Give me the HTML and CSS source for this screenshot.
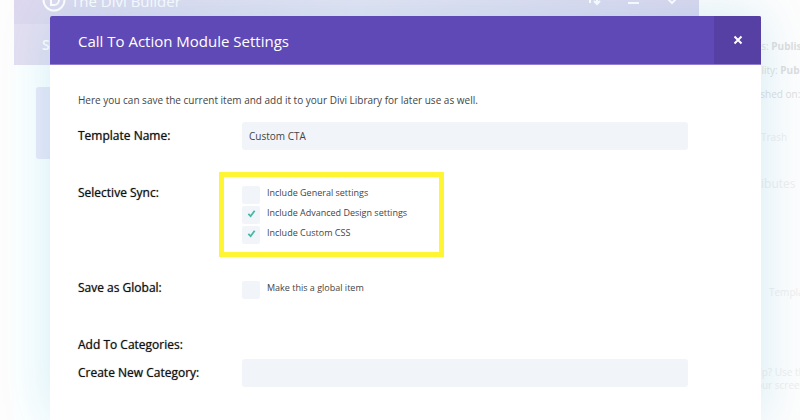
FILE: index.html
```
<!DOCTYPE html>
<html lang="en">
<head>
  <meta charset="UTF-8" />
  <meta name="viewport" content="width=device-width, initial-scale=1" />
  <title>Call To Action Module Settings</title>
  <link rel="stylesheet" href="styles.css">
</head>
<body>
  <div class="page" aria-hidden="true">
    <div class="builder">
      <div class="builder-bar">
        <svg class="logo" viewBox="0 0 24 24"><circle cx="12" cy="12" r="10.5" /><path d="M9 7v10h3a5 5 0 0 0 0-10z" /></svg>
        <span class="builder-title">The Divi Builder</span>
        <svg class="bar-icon" viewBox="0 0 14 14"><path d="M3 11V2M0 5l3-3 3 3M10 2v9M7 9l3 3 3-3" /></svg>
        <svg class="bar-icon" viewBox="0 0 14 14"><path d="M2 3h11M2 7h11M2 11h11" /></svg>
        <svg class="bar-icon" viewBox="0 0 14 14"><path d="M2 6l5 5 5-5" /></svg>
      </div>
      <div class="builder-tools">Save</div>
      <div class="builder-body">
        <div class="section-handle"></div>
      </div>
    </div>
    <div class="sidebar">
      <p>Status: <b>Published</b></p>
      <p>Visibility: <b>Public</b></p>
      <p>Published on:</p>
      <p class="trash">Trash</p>
      <p class="attributes">Attributes</p>
      <p class="template">Template</p>
      <p class="help">Need help? Use the<br>above your screen</p>
    </div>
  </div>

  <div class="modal">
    <div class="modal-header">
      <h1>Call To Action Module Settings</h1>
      <button class="close" type="button" aria-label="Close">
        <svg viewBox="0 0 10 10"><path d="M1.5 1.5l7 7M8.5 1.5l-7 7" /></svg>
      </button>
    </div>
    <form class="modal-body">
      <p class="intro">Here you can save the current item and add it to your Divi Library for later use as well.</p>

      <div class="row name-row">
        <label class="label" for="templateName">Template Name:</label>
        <input class="text" type="text" id="templateName" value="Custom CTA">
      </div>

      <div class="row sync-row" role="group" aria-labelledby="syncLabel">
        <span class="label" id="syncLabel">Selective Sync:</span>
        <div class="checks">
          <label class="check"><input type="checkbox">Include General settings</label>
          <label class="check"><input type="checkbox" checked>Include Advanced Design settings</label>
          <label class="check"><input type="checkbox" checked>Include Custom CSS</label>
          <div class="highlight"></div>
        </div>
      </div>

      <div class="row global-row" role="group" aria-labelledby="globalLabel">
        <span class="label" id="globalLabel">Save as Global:</span>
        <div class="checks">
          <label class="check"><input type="checkbox">Make this a global item</label>
        </div>
      </div>

      <div class="row">
        <span class="label">Add To Categories:</span>
      </div>

      <div class="row">
        <label class="label" for="newCategory">Create New Category:</label>
        <input class="text" type="text" id="newCategory">
      </div>
    </form>
  </div>
</body>
</html>
```

FILE: styles.css
```
* {
  margin: 0;
  padding: 0;
  box-sizing: border-box;
}

body {
  height: 100vh;
  overflow: hidden;
  position: relative;
  background: #fdfdfd;
  font-family: 'Open Sans', sans-serif;
  color: #444;
}

svg {
  fill: none;
  stroke: currentColor;
  stroke-width: 2;
}

/* faded page behind the modal */
.page {
  position: absolute;
  inset: 0;
  display: flex;
  padding-left: 14px;
  overflow: hidden;
}

.builder {
  flex: 1;
  display: flex;
  flex-direction: column;
  color: #fff;
}

.builder-bar {
  display: flex;
  align-items: flex-end;
  gap: 25px;
  height: 24px;
  padding: 0 20px 12px 28px;
  background: linear-gradient(90deg, #ddd8ee, #e6e5f3 50%, #dcd8ee);
}

.logo {
  flex: none;
  width: 24px;
  height: 24px;
  margin-right: -20px;
}

.builder-title {
  flex: 1;
  font-size: 15px;
  line-height: 22px;
}

.bar-icon {
  flex: none;
  width: 14px;
  height: 14px;
  margin-bottom: 6px;
}

.builder-tools {
  height: 41px;
  padding-left: 28px;
  background: #e4dff1;
  font-size: 14px;
  font-weight: 600;
  line-height: 41px;
}

.builder-body {
  flex: 1;
  padding: 22px;
  background: #fcffff;
}

.section-handle {
  width: 60px;
  height: 72px;
  background: #e9e9f8;
  border-radius: 3px;
}

.sidebar {
  flex: none;
  width: 101px;
  padding: 34px 0 0 38px;
  font-size: 10px;
  line-height: 24px;
  color: #dedede;
  white-space: nowrap;
}

.trash,
.attributes,
.template,
.help {
  color: #eee;
}

.trash {
  margin-top: 19px;
  padding-left: 24px;
}

.attributes {
  margin-top: 23px;
  padding-left: 3px;
  font-size: 12px;
}

.template {
  margin-top: 84px;
  padding-left: 32px;
}

.help {
  margin-top: 62px;
  margin-left: -17px;
  line-height: 13px;
}

.modal {
  position: absolute;
  top: 16px;
  bottom: 0;
  left: 50px;
  right: 39px;
  background: #fff;
  border-radius: 2px 2px 0 0;
  box-shadow: 0 0 50px rgba(0, 150, 200, 0.17);
}

.modal-header {
  display: flex;
  align-items: stretch;
  height: 49px;
  padding-left: 28px;
  background: #5f49b6;
  border-bottom: 1px solid #927fd0;
  border-radius: 2px 2px 0 0;
  color: #fff;
}

.modal-header h1 {
  flex: 1;
  font-size: 15px;
  font-weight: 400;
  line-height: 50px;
}

.close {
  display: grid;
  place-items: center;
  width: 47px;
  background: #5640a3;
  border: 0;
  border-radius: 0 2px 0 0;
  color: #fff;
  cursor: pointer;
}

.close svg {
  width: 10px;
  height: 10px;
}

.modal-body {
  padding: 26px 73px 0 28px;
}

.intro {
  margin-bottom: 13px;
  font-size: 10px;
  line-height: 18px;
}

.row {
  display: grid;
  grid-template-columns: 164px 1fr;
}

.label {
  font-size: 12px;
  line-height: 28px;
  color: #111;
  text-shadow: 0 0 1px rgba(0, 0, 0, 0.6);
}

.text {
  width: 100%;
  height: 28px;
  padding: 0 7px;
  background: #f1f5fa;
  border: 0;
  border-radius: 3px;
  font: 10px 'Open Sans', sans-serif;
  color: #444;
}

.name-row {
  margin-bottom: 29px;
}

.sync-row {
  margin-bottom: 30px;
}

.checks {
  position: relative;
  display: flex;
  flex-direction: column;
  gap: 2px;
  padding-top: 7px;
}

.check {
  display: flex;
  gap: 7px;
  font-size: 9px;
  line-height: 13px;
}

.check input {
  appearance: none;
  width: 18px;
  height: 18px;
  background: #f1f5fa;
  border-radius: 2px;
}

.check input:checked {
  background: #f1f5fa url("data:image/svg+xml,%3Csvg xmlns='http://www.w3.org/2000/svg' viewBox='0 0 10 10'%3E%3Cpath d='M1.5 5.5l2.5 2.5 4.5-6' fill='none' stroke='%2346b8a4' stroke-width='2'/%3E%3C/svg%3E") center 3px / 9px no-repeat;
}

/* marks the sync options */
.highlight {
  position: absolute;
  top: -7px;
  left: -23px;
  width: 225px;
  height: 85px;
  border: 5px solid #fff533;
  pointer-events: none;
}

.global-row {
  margin-bottom: 29px;
}
```
